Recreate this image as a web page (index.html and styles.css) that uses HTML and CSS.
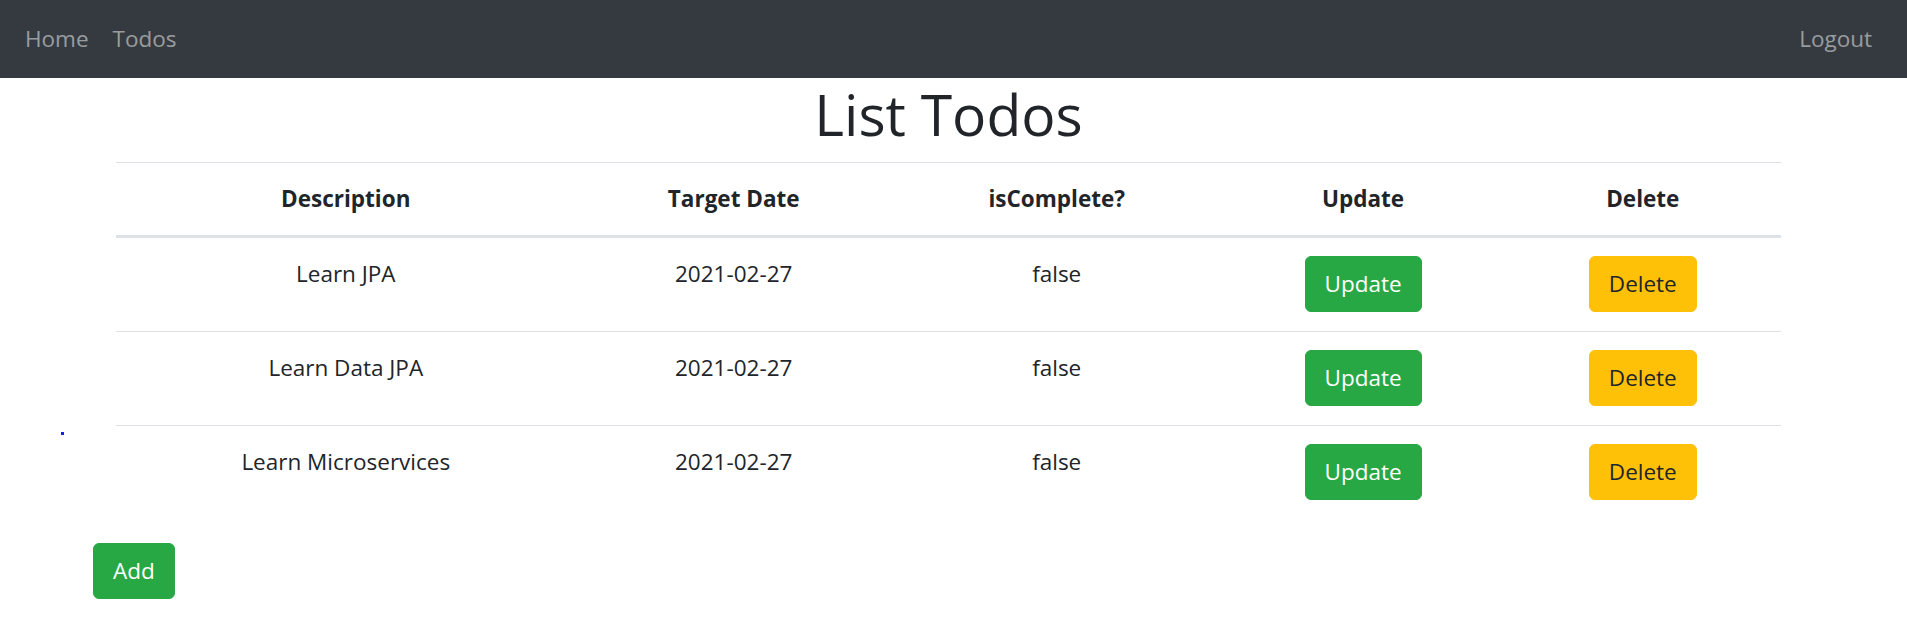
FILE: index.html
```html
<!DOCTYPE html>
<html lang="en">
<head>
<meta charset="utf-8">
<title>List Todos</title>
<link rel="stylesheet" href="styles.css">
</head>
<body>
<header class="navbar">
  <nav class="nav-left">
    <a class="nav-link" href="#">Home</a>
    <a class="nav-link" href="#">Todos</a>
  </nav>
  <nav class="nav-right">
    <a class="nav-link" href="#">Logout</a>
  </nav>
</header>
<span class="stray-dot"></span>
<main class="page">
  <div class="container">
    <h1 class="title">List Todos</h1>
    <table class="table">
      <thead>
        <tr>
          <th class="col-desc">Description</th>
          <th class="col-date">Target Date</th>
          <th class="col-done">isComplete?</th>
          <th class="col-upd">Update</th>
          <th class="col-del">Delete</th>
        </tr>
      </thead>
      <tbody>
        <tr>
          <td>Learn JPA</td>
          <td>2021-02-27</td>
          <td>false</td>
          <td><button class="btn btn-success">Update</button></td>
          <td><button class="btn btn-warning">Delete</button></td>
        </tr>
        <tr>
          <td>Learn Data JPA</td>
          <td>2021-02-27</td>
          <td>false</td>
          <td><button class="btn btn-success">Update</button></td>
          <td><button class="btn btn-warning">Delete</button></td>
        </tr>
        <tr>
          <td>Learn Microservices</td>
          <td>2021-02-27</td>
          <td>false</td>
          <td><button class="btn btn-success">Update</button></td>
          <td><button class="btn btn-warning">Delete</button></td>
        </tr>
      </tbody>
    </table>
  </div>
  <div class="actions">
    <button class="btn btn-success">Add</button>
  </div>
</main>
</body>
</html>
```
FILE: styles.css
```css
* { box-sizing: border-box; }
html, body { margin: 0; padding: 0; }
body {
  font-family: "Open Sans", "Noto Sans", sans-serif;
  font-size: 22.5px;
  line-height: 36px;
  color: #212529;
  background: #fff;
  width: 1907px;
  height: 640px;
  overflow: hidden;
  position: relative;
}
.navbar {
  height: 78px;
  background: #343a40;
  display: flex;
  align-items: center;
  justify-content: space-between;
  padding: 0 23px 0 13px;
}
.nav-left, .nav-right { display: flex; }
.nav-link {
  color: rgba(255, 255, 255, 0.5);
  text-decoration: none;
  padding: 0 12px;
  font-size: 22.5px;
  line-height: 36px;
}
.stray-dot {
  position: absolute;
  left: 61px;
  top: 432px;
  width: 3px;
  height: 3px;
  background: #1a1aff;
}
.container {
  width: 1665px;
  margin: 0 0 0 116px;
}
.title {
  margin: 0 0 12px;
  font-size: 57px;
  line-height: 72px;
  font-weight: 500;
  text-align: center;
}
.table {
  width: 100%;
  border-collapse: collapse;
  table-layout: fixed;
  margin-bottom: 24px;
}
.table th, .table td {
  text-align: center;
  vertical-align: top;
  padding: 18px;
}
.table td { padding-bottom: 19px; }
.table th {
  font-weight: 700;
  border-top: 1.5px solid #dee2e6;
  border-bottom: 3px solid #dee2e6;
}
.table tbody tr + tr td { border-top: 1.5px solid #dee2e6; }
.col-desc { width: 27.6%; }
.col-date { width: 19%; }
.col-done { width: 19.8%; }
.col-upd { width: 17%; }
.col-del { width: 16.6%; }
.btn {
  font-family: inherit;
  font-size: 22.5px;
  line-height: 36px;
  padding: 9px 19px;
  border: 1.5px solid transparent;
  border-radius: 6px;
  cursor: pointer;
}
.btn-success { background: #28a745; border-color: #28a745; color: #fff; }
.btn-warning { background: #ffc107; border-color: #ffc107; color: #212529; }
.actions { padding-left: 93px; }
```
